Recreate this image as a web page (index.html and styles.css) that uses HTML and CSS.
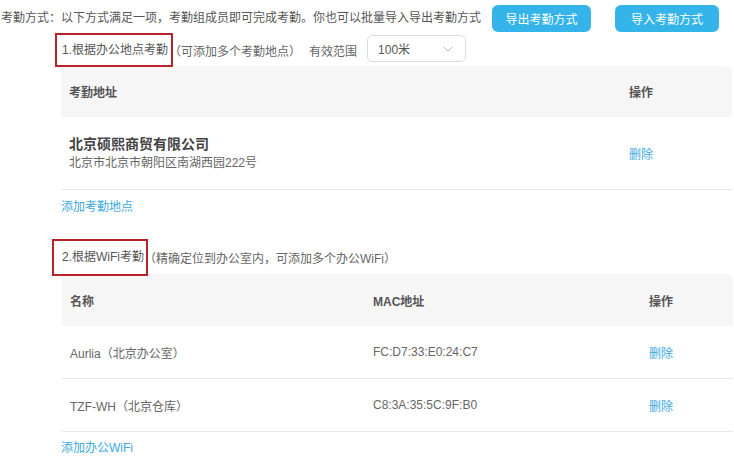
FILE: index.html
```html
<!DOCTYPE html>
<html lang="zh-CN">
<head>
  <meta charset="UTF-8">
  <meta name="viewport" content="width=device-width, initial-scale=1.0">
  <title>考勤方式</title>
  <link rel="stylesheet" href="styles.css">
</head>
<body>
  <div class="topbar">
    <span class="intro">考勤方式：以下方式满足一项，考勤组成员即可完成考勤。你也可以批量导入导出考勤方式</span>
    <button class="btn btn-export">导出考勤方式</button>
    <button class="btn btn-import">导入考勤方式</button>
  </div>

  <div class="section section-place">
    <div class="title">
      <span class="mark mark-place">1.根据办公地点考勤</span>
      <span class="hint">（可添加多个考勤地点）</span>
      <span class="range-label">有效范围</span>
      <div class="select">
        <span>100米</span>
        <svg width="10" height="6" viewBox="0 0 10 6"><path d="M1 1l4 4 4-4" fill="none" stroke="#bbb" stroke-width="1"/></svg>
      </div>
    </div>
    <div class="table table-place">
      <div class="row head">
        <div class="cell">考勤地址</div>
        <div class="cell">操作</div>
      </div>
      <div class="row body tall">
        <div class="cell">
          <div class="company">北京硕熙商贸有限公司</div>
          <div class="address">北京市北京市朝阳区南湖西园222号</div>
        </div>
        <div class="cell"><a class="link" href="#">删除</a></div>
      </div>
    </div>
    <a class="link add" href="#">添加考勤地点</a>
  </div>

  <div class="section section-wifi">
    <div class="title">
      <span class="mark mark-wifi">2.根据WiFi考勤</span>
      <span class="hint">（精确定位到办公室内，可添加多个办公WiFi）</span>
    </div>
    <div class="table table-wifi">
      <div class="row head">
        <div class="cell">名称</div>
        <div class="cell">MAC地址</div>
        <div class="cell">操作</div>
      </div>
      <div class="row body">
        <div class="cell">Aurlia（北京办公室）</div>
        <div class="cell">FC:D7:33:E0:24:C7</div>
        <div class="cell"><a class="link" href="#">删除</a></div>
      </div>
      <div class="row body">
        <div class="cell">TZF-WH（北京仓库）</div>
        <div class="cell">C8:3A:35:5C:9F:B0</div>
        <div class="cell"><a class="link" href="#">删除</a></div>
      </div>
    </div>
    <a class="link add" href="#">添加办公WiFi</a>
  </div>
</body>
</html>
```

FILE: styles.css
```css
body {
  margin: 0;
  font-family: "Liberation Sans", "Noto Sans CJK SC", sans-serif;
  font-size: 12px;
  color: #666;
  background: #fff;
  width: 734px;
  overflow: hidden;
}
.topbar {
  display: flex;
  align-items: flex-start;
  height: 33px;
  padding-left: 1px;
}
.intro {
  color: #555;
  line-height: 16px;
  padding-top: 10px;
}
.btn {
  height: 27px;
  border: none;
  border-radius: 6px;
  background: #35b4ea;
  color: #fff;
  font-family: inherit;
  font-size: 12px;
  padding: 0;
  margin-top: 5px;
}
.btn-export {
  width: 99px;
  margin-left: 11px;
}
.btn-import {
  width: 104px;
  margin-left: 24px;
}
.section {
  padding-left: 61px;
}
.title {
  display: flex;
  align-items: center;
  height: 34px;
  margin-left: -6px;
}
.mark {
  box-sizing: border-box;
  height: 34px;
  line-height: 30px;
  border: 2px solid #b8232a;
  color: #555;
}
.mark-place {
  width: 118px;
  padding-left: 5px;
}
.hint {
  color: #666;
  margin-left: -4px;
}
.range-label {
  margin-left: 8px;
}
.select {
  box-sizing: border-box;
  width: 99px;
  height: 27px;
  margin-left: 10px;
  margin-top: -3px;
  border: 1px solid #ddd;
  border-radius: 5px;
  display: flex;
  align-items: center;
  justify-content: space-between;
  padding: 0 12px 0 10px;
  color: #555;
}
.table {
  width: 671px;
  margin-top: -1px;
}
.row {
  display: grid;
  align-items: center;
}
.table-place .row {
  grid-template-columns: 560px 1fr;
}
.table-wifi .row {
  grid-template-columns: 303px 276px 1fr;
}
.head {
  height: 51px;
  background: #f6f6f6;
  border-radius: 6px 6px 0 0;
  font-weight: bold;
  color: #555;
}
.cell {
  padding-left: 8px;
}
.body {
  height: 52px;
  border-bottom: 1px solid #e8e8e8;
}
.body.tall {
  height: 72px;
}
.company {
  font-size: 14px;
  font-weight: bold;
  color: #444;
  line-height: 20px;
}
.address {
  line-height: 18px;
}
.link {
  color: #3aa9e2;
  text-decoration: none;
}
.add {
  display: block;
  margin-top: 9px;
  line-height: 16px;
}
.section-wifi {
  margin-top: 24px;
}
.section-wifi .title {
  margin-left: -9px;
  height: 37px;
}
.mark-wifi {
  height: 37px;
  line-height: 33px;
  width: 96px;
  padding-left: 8px;
}
.table-wifi {
  margin-top: -2px;
  margin-left: 1px;
}
.table-wifi .head {
  height: 52px;
}
.section-wifi .add {
  margin-top: 8px;
}
```
